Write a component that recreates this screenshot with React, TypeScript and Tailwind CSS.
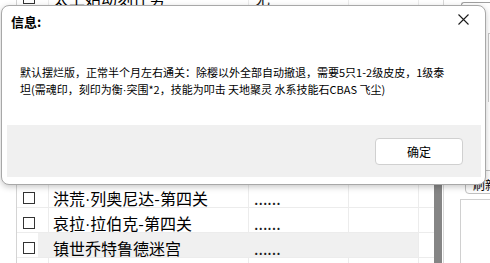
import React from "react";

type Row = { name: string; val: string; hl?: boolean; box?: boolean };

const rows: Row[] = [
  { name: "太上始动刻任务", val: "无", box: true },
  { name: "初始·第一关", val: "......", box: true },
  { name: "初始·第二关", val: "......", box: true },
  { name: "初始·第三关", val: "......", box: true },
  { name: "洪荒·第一关", val: "......", box: true },
  { name: "洪荒·第二关", val: "......", box: true },
  { name: "洪荒·第三关", val: "......", box: true },
  { name: "哀拉·第三关", val: "......", box: true },
  { name: "洪荒·列奥尼达-第四关", val: "......", box: true },
  { name: "哀拉·拉伯克-第四关", val: "......", box: true },
  { name: "镇世乔特鲁德迷宫", val: "......", box: true, hl: true },
  { name: "", val: "", box: false },
];

function Dotted({ text }: { text: string }) {
  const parts = text.split("·");
  return (
    <>
      {parts.map((p, i) => (
        <React.Fragment key={i}>
          {i > 0 && <span className="font-['Liberation_Sans',sans-serif]">·</span>}
          {p}
        </React.Fragment>
      ))}
    </>
  );
}

function TableRow({ r }: { r: Row }) {
  return (
    <div className="flex h-[25px] border-b border-[#ececec]">
      <div
        className={`w-[32px] h-full border-r ${
          r.hl
            ? "border-[#f0f0f0] bg-[linear-gradient(to_right,#ffffff_21px,#f0f0f0_21px)]"
            : "border-[#ececec]"
        } pt-[9px] pl-[6px]`}
      >
        {r.box && <div className="w-[12px] h-[12px] border border-[#333333] bg-white" />}
      </div>
      <div
        className={`w-[200px] h-full border-r ${
          r.hl ? "border-[#f0f0f0] bg-[#f0f0f0]" : "border-[#ececec]"
        } pl-[4px] pt-[4px] text-[16px] leading-[22px] text-black whitespace-nowrap overflow-hidden`}
      >
        <Dotted text={r.name} />
      </div>
      <div
        className={`w-[100px] h-full border-r ${
          r.hl ? "border-[#f0f0f0] bg-[#f0f0f0]" : "border-[#ececec]"
        } pl-[5px] pt-[4px] text-[16px] leading-[22px] text-[#1a1a1a] whitespace-nowrap`}
      >
        {r.val}
      </div>
      <div
        className={`w-[70px] h-full border-r border-[#ececec] ${r.hl ? "bg-[#f0f0f0]" : ""}`}
      />
      <div className="w-[15px] h-full" />
    </div>
  );
}

export default function App() {
  return (
    <div className="relative w-[490px] h-[263px] overflow-hidden bg-white font-['Microsoft_YaHei','Noto_Sans_CJK_SC',sans-serif] text-black">
      <div className="flex h-full">
        <div className="w-[16px] shrink-0" />
        <div className="w-[418px] shrink-0 border-l border-[#d4d4d4] h-full overflow-hidden">
          <div className="mt-[-17px]">
            {rows.map((r, i) => (
              <TableRow key={i} r={r} />
            ))}
          </div>
        </div>
        <div className="w-[9px] shrink-0 h-full flex flex-col">
          <div className="h-[100px]" />
          <div className="w-[8px] flex-1 bg-[#858585]" />
        </div>
        <div className="flex-1 border-l border-[#d9d9d9] h-full flex flex-col overflow-hidden">
          <div className="mt-[2px] ml-[17px] h-[100px] border-l border-t border-[#a0a0a0] rounded-tl-[3px] shrink-0 flex flex-col">
            <div className="mt-[30px] ml-[26px] flex-1 border-l border-t border-[#c8c8c8]" />
          </div>
          <div className="mt-[68px] ml-[21px] h-[24px] w-[60px] shrink-0 border border-[#c0c0c0] rounded-[4px] bg-[#fdfdfd] pl-[7px] text-[12px] leading-[22px] whitespace-nowrap flex items-end">
            <span className="leading-[14px] mb-[1px]">刷新</span>
          </div>
          <div className="mt-[5px] ml-[16px] flex-1 border-l border-t border-[#d0d0d0]" />
        </div>
      </div>

      <div className="absolute left-[1px] top-[5px] w-[485px] h-[180px] bg-white border border-[#a8a8a8] rounded-[8px] shadow-[0_2px_6px_rgba(0,0,0,0.22)] flex flex-col">
        <div className="flex justify-between items-start pl-[9px] pr-[16px] pt-[7px]">
          <span className="text-[13px] leading-[17px] font-bold">信息:</span>
          <svg width="11" height="11" viewBox="0 0 11 11" className="mt-[1px]">
            <path d="M0.5 0.5 L10.5 10.5 M10.5 0.5 L0.5 10.5" stroke="#1a1a1a" strokeWidth="1.1" fill="none" />
          </svg>
        </div>
        <div className="mt-[34px] pl-[18px] text-[11px] leading-[17px] whitespace-nowrap text-black">
          默认摆烂版，正常半个月左右通关：除樱以外全部自动撤退，需要5只1-2级皮皮，1级泰
          <br />
          坦(需魂印，刻印为衡<span className="font-['Liberation_Sans',sans-serif]">·</span>突围*2，技能为叩击 天地聚灵 水系技能石CBAS 飞尘)
        </div>
        <div className="mt-auto mb-[7px] ml-[5px] mr-[4px] h-[52px] bg-[#f0f0f0] flex items-center justify-end pr-[18px]">
          <button className="w-[88px] h-[27px] bg-white border border-[#d0d0d0] rounded-[4px] text-[12px] leading-[25px] text-black">
            确定
          </button>
        </div>
      </div>
    </div>
  );
}
